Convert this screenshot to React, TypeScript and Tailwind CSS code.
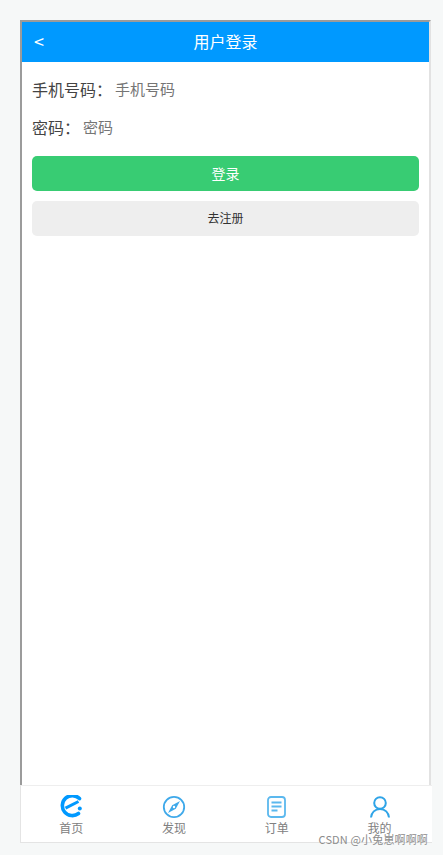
const font = { fontFamily: '"Noto Sans CJK SC", "Liberation Sans", sans-serif' };

function HomeIcon() {
  return (
    <svg width="24" height="24" viewBox="0 0 24 24" fill="none">
      <path
        d="M20.5 3.6A10 10 0 1 0 19.500 18.500"
        stroke="#0099ff"
        strokeWidth="3.6"
        strokeLinecap="round"
      />
      <path d="M6.500 13.200 19.500 6.500" stroke="#0099ff" strokeWidth="3" />
      <circle cx="20.800" cy="13.500" r="2" fill="#0099ff" />
    </svg>
  );
}

function CompassIcon() {
  return (
    <svg width="24" height="24" viewBox="0 0 24 24" fill="none">
      <circle cx="12" cy="12" r="10.200" stroke="#3fa9ea" strokeWidth="1.800" />
      <path d="M18 6 13.800 13.800 6 18 10.200 10.200Z" fill="#3fa9ea" />
      <circle cx="12" cy="12" r="1.200" fill="#ffffff" />
    </svg>
  );
}

function OrderIcon() {
  return (
    <svg width="20" height="22" viewBox="0 0 20 22" fill="none">
      <rect x="1" y="1" width="17" height="20" rx="3" stroke="#5bb8ee" strokeWidth="1.800" />
      <path d="M4.500 6.500h10M4.500 10.500h10M4.500 14.500h6" stroke="#5bb8ee" strokeWidth="2" />
    </svg>
  );
}

function UserIcon() {
  return (
    <svg width="20" height="22" viewBox="0 0 20 22" fill="none">
      <circle cx="10" cy="7" r="5.800" stroke="#2fa4e7" strokeWidth="2" />
      <path d="M1 21.500c.4-5 4-8.500 9-8.500s8.600 3.500 9 8.500" stroke="#2fa4e7" strokeWidth="2" />
    </svg>
  );
}

const tabs = [
  { label: "首页", icon: <HomeIcon /> },
  { label: "发现", icon: <CompassIcon /> },
  { label: "订单", icon: <OrderIcon /> },
  { label: "我的", icon: <UserIcon /> },
];

export default function App() {
  return (
    <div
      className="relative flex h-[855px] w-[443px] flex-col overflow-hidden bg-[#f6f8f8] pl-5 pt-5 pb-3"
      style={font}
    >
      {/* Page frame */}
      <div className="flex w-[411px] flex-1 flex-col border-t-2 border-r-2 border-l-2 border-t-[#9b9b9b] border-r-[#e2e2e2] border-l-[#9b9b9b] bg-white">
        <div className="relative flex h-10 items-center justify-center bg-[#0099ff] pb-0.5 text-white">
          <span className="absolute left-3 text-lg leading-none">&lt;</span>
          <span className="text-base">用户登录</span>
        </div>

        <div className="flex flex-col px-2.5 pt-[15px] text-[#444444]">
          <div className="flex h-6 items-center text-base">
            <span className="w-[83px]">手机号码：</span>
            <span className="text-[15px] text-[#757575]">手机号码</span>
          </div>
          <div className="mt-3.5 flex h-6 items-center text-base">
            <span className="w-[51px]">密码：</span>
            <span className="text-[15px] text-[#757575]">密码</span>
          </div>
          <button className="mt-[17px] flex h-[35px] items-center justify-center rounded-[5px] bg-[#38cc73] pb-0.5 text-sm text-white">
            登录
          </button>
          <button className="mt-2.5 flex h-[35px] items-center justify-center rounded-[5px] bg-[#eeeeee] pb-0.5 text-xs text-[#333333]">
            去注册
          </button>
        </div>
      </div>

      {/* Tab bar */}
      <div className="grid h-[58px] w-[412px] grid-cols-4 border border-[#e4e4e4] border-t-[#eeeeee] border-r-0 bg-white">
        {tabs.map((tab) => (
          <div key={tab.label} className="flex flex-col items-center pt-[9px] pr-0.5">
            <div className="flex h-6 items-center justify-center">{tab.icon}</div>
            <span className="mt-px text-xs leading-[15px] text-[#808080]">{tab.label}</span>
          </div>
        ))}
      </div>

      {/* Watermark */}
      <span className="absolute bottom-[8px] right-[15px] text-[11px] leading-4 tracking-[0.15px] text-[#8c8c8c]">
        CSDN @小兔崽啊啊啊
      </span>
    </div>
  );
}
